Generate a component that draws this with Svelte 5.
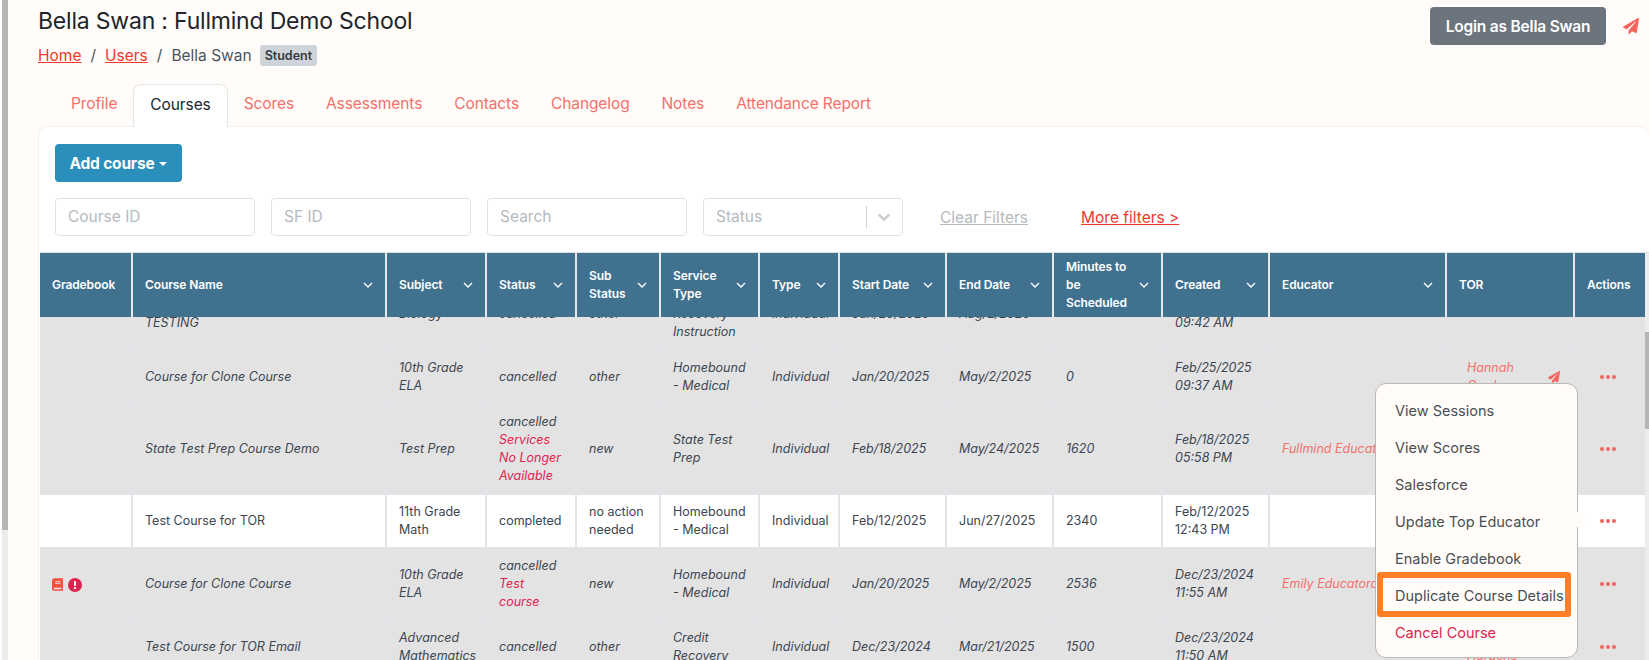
<script>
  import { onMount } from 'svelte';

  const tabs = ['Profile', 'Courses', 'Scores', 'Assessments', 'Contacts', 'Changelog', 'Notes', 'Attendance Report'];

  const columns = [
    { label: 'Gradebook', sort: false, width: 93 },
    { label: 'Course Name', sort: true, width: 254 },
    { label: 'Subject', sort: true, width: 100 },
    { label: 'Status', sort: true, width: 90 },
    { label: 'Sub\nStatus', sort: true, width: 84 },
    { label: 'Service\nType', sort: true, width: 99 },
    { label: 'Type', sort: true, width: 80 },
    { label: 'Start Date', sort: true, width: 107 },
    { label: 'End Date', sort: true, width: 107 },
    { label: 'Minutes to\nbe\nScheduled', sort: true, width: 109 },
    { label: 'Created', sort: true, width: 107 },
    { label: 'Educator', sort: true, width: 177 },
    { label: 'TOR', sort: false, width: 128 },
    { label: 'Actions', sort: false, width: 70 }
  ];

  const rows = [
    { name: 'Test Course for Clone\nTESTING', subject: 'Biology', status: 'cancelled', sub: 'other', service: 'Credit\nRecovery\nInstruction', start: 'Jan/20/2025', end: 'Aug/2/2025', minutes: '', created: 'Feb/25/2025\n09:42 AM', educator: '', tor: '' },
    { name: 'Course for Clone Course', subject: '10th Grade\nELA', status: 'cancelled', sub: 'other', service: 'Homebound\n- Medical', start: 'Jan/20/2025', end: 'May/2/2025', minutes: '0', created: 'Feb/25/2025\n09:37 AM', educator: '', tor: 'Hannah\nGardenas', plane: true },
    { name: 'State Test Prep Course Demo', subject: 'Test Prep', status: 'cancelled', reason: 'Services\nNo Longer\nAvailable', sub: 'new', service: 'State Test\nPrep', start: 'Feb/18/2025', end: 'May/24/2025', minutes: '1620', created: 'Feb/18/2025\n05:58 PM', educator: 'Fullmind Educator', tor: '' },
    { name: 'Test Course for TOR', subject: '11th Grade\nMath', status: 'completed', sub: 'no action\nneeded', service: 'Homebound\n- Medical', start: 'Feb/12/2025', end: 'Jun/27/2025', minutes: '2340', created: 'Feb/12/2025\n12:43 PM', educator: '', tor: '', active: true },
    { name: 'Course for Clone Course', subject: '10th Grade\nELA', status: 'cancelled', reason: 'Test\ncourse', sub: 'new', service: 'Homebound\n- Medical', start: 'Jan/20/2025', end: 'May/2/2025', minutes: '2536', created: 'Dec/23/2024\n11:55 AM', educator: 'Emily Educatorand', tor: '', flagged: true },
    { name: 'Test Course for TOR Email', subject: 'Advanced\nMathematics', status: 'cancelled', sub: 'other', service: 'Credit\nRecovery', start: 'Dec/23/2024', end: 'Mar/21/2025', minutes: '1500', created: 'Dec/23/2024\n11:50 AM', educator: '', tor: 'Hannah\nHardens' }
  ];

  const menu = ['View Sessions', 'View Scores', 'Salesforce', 'Update Top Educator', 'Enable Gradebook', 'Duplicate Course Details'];

  const plane = 'M476 3.2L12.5 270.6c-18.1 10.4-15.8 35.6 2.2 43.2L121 358.4l287.3-253.2c5.5-4.9 13.3 2.6 8.6 8.3L176 407v80.5c0 23.6 28.5 32.9 42.5 15.8L282 426l124.6 52.2c14.2 6 30.4-2.9 33-18.2l72-432C515 7.8 493.3-6.8 476 3.2z';

  let scroller;

  onMount(() => {
    scroller.scrollTop = 38;
  });
</script>

<div class="page">
  <div class="page-bar"><div class="page-thumb"></div></div>

  <main class="main">
    <header class="head">
      <div>
        <h1>Bella Swan : Fullmind Demo School</h1>
        <nav class="crumbs">
          <a href="#home">Home</a>
          <span class="slash">/</span>
          <a href="#users">Users</a>
          <span class="slash">/</span>
          <span>Bella Swan</span>
          <span class="badge">Student</span>
        </nav>
      </div>
      <div class="head-right">
        <button class="login">Login as Bella Swan</button>
        <svg class="plane-top" viewBox="0 0 512 512"><path d={plane} /></svg>
      </div>
    </header>

    <ul class="tabs">
      {#each tabs as tab}
        <li class:active={tab === 'Courses'}>{tab}</li>
      {/each}
    </ul>

    <section class="card">
      <div class="tools">
        <button class="add">Add course<span class="caret"></span></button>
        <div class="filters">
          <div class="field">Course ID</div>
          <div class="field">SF ID</div>
          <div class="field">Search</div>
          <div class="field select">
            <span>Status</span>
            <span class="sep"></span>
            <svg viewBox="0 0 20 20" width="18" height="18"><path d="M4 7l6 6 6-6" fill="none" stroke="#c9ccd0" stroke-width="2.6" /></svg>
          </div>
          <a class="clear" href="#clear">Clear Filters</a>
          <a class="more" href="#more">More filters &gt;</a>
        </div>
      </div>

      <div class="table-area">
        <div class="scroller" bind:this={scroller}>
          <table>
            <colgroup>
              {#each columns as col}
                <col style:width="{col.width}px" />
              {/each}
            </colgroup>
            <thead>
              <tr>
                {#each columns as col}
                  <th>
                    <div class="th-in">
                      <span>{col.label}</span>
                      {#if col.sort}
                        <svg viewBox="0 0 10 6" width="10" height="6"><path d="M1 1l4 4 4-4" fill="none" stroke="#fff" stroke-width="1.3" /></svg>
                      {/if}
                    </div>
                  </th>
                {/each}
              </tr>
            </thead>
            <tbody>
              {#each rows as row}
                <tr class:active={row.active}>
                  <td class="icons">
                    {#if row.flagged}
                      <svg class="book" viewBox="0 0 448 512"><path d="M448 360V24c0-13.3-10.7-24-24-24H96C43 0 0 43 0 96v320c0 53 43 96 96 96h328c13.3 0 24-10.7 24-24v-16c0-7.5-3.5-14.3-8.9-18.7-4.2-15.4-4.2-59.3 0-74.7 5.4-4.3 8.9-11.1 8.9-18.6zM128 134c0-3.3 2.7-6 6-6h212c3.3 0 6 2.7 6 6v20c0 3.3-2.7 6-6 6H134c-3.3 0-6-2.7-6-6v-20zm0 64c0-3.3 2.7-6 6-6h212c3.3 0 6 2.7 6 6v20c0 3.3-2.7 6-6 6H134c-3.3 0-6-2.7-6-6v-20zm253.4 250H96c-17.7 0-32-14.3-32-32 0-17.6 14.4-32 32-32h285.4c-1.9 17.1-1.9 46.9 0 64z" /></svg>
                      <svg class="alert" viewBox="0 0 14 14"><circle cx="7" cy="7" r="7" fill="#e0234e" /><rect x="6" y="3" width="2" height="5" rx="0.8" fill="#fff" /><circle cx="7" cy="10.2" r="1.1" fill="#fff" /></svg>
                    {/if}
                  </td>
                  <td>{row.name}</td>
                  <td>{row.subject}</td>
                  <td>
                    {row.status}
                    {#if row.reason}<div class="reason">{row.reason}</div>{/if}
                  </td>
                  <td>{row.sub}</td>
                  <td>{row.service}</td>
                  <td>Individual</td>
                  <td>{row.start}</td>
                  <td>{row.end}</td>
                  <td>{row.minutes}</td>
                  <td>{row.created}</td>
                  <td class="educator">{row.educator}</td>
                  <td class="tor">
                    {row.tor}
                    {#if row.plane}
                      <svg class="plane" viewBox="0 0 512 512"><path d={plane} /></svg>
                    {/if}
                  </td>
                  <td class="dots">
                    <svg viewBox="0 0 16 4" width="16" height="4"><circle cx="2" cy="2" r="2" /><circle cx="8" cy="2" r="2" /><circle cx="14" cy="2" r="2" /></svg>
                  </td>
                </tr>
              {/each}
            </tbody>
          </table>
        </div>
        <div class="table-bar"><div class="table-thumb"></div></div>
      </div>
    </section>
  </main>

  <div class="popup">
    <span class="arrow"></span>
    {#each menu as item}
      <div class="item">{item}</div>
    {/each}
    <div class="item danger">Cancel Course</div>
    <div class="highlight"></div>
  </div>
</div>

<style>
  :global(body) {
    margin: 0;
    overflow: hidden;
    background: #fffcf9;
  }

  .page {
    position: relative;
    display: flex;
    height: 660px;
    font-family: Inter, "Liberation Sans", sans-serif;
    color: #3c4650;
    overflow: hidden;
  }

  .page-bar {
    width: 6px;
    margin-left: 2px;
    background: #ececec;
    flex: none;
  }

  .page-thumb {
    height: 530px;
    background: #b5b5b5;
  }

  .main {
    flex: 1;
    min-width: 0;
    padding-left: 30px;
    display: flex;
    flex-direction: column;
  }

  .head {
    display: flex;
    justify-content: space-between;
    align-items: flex-start;
    padding-top: 7px;
    padding-right: 10px;
  }

  h1 {
    margin: 0;
    font-size: 23px;
    line-height: 28px;
    font-weight: 400;
    color: #212529;
    letter-spacing: -0.2px;
  }

  .crumbs {
    display: flex;
    align-items: center;
    margin-top: 8px;
    height: 24px;
    font-size: 15.5px;
    color: #4a5560;
  }

  .crumbs a {
    color: #f0392b;
  }

  .slash {
    margin: 0 9px;
  }

  .badge {
    margin-left: 8px;
    padding: 0 5px;
    height: 21px;
    line-height: 21px;
    font-size: 12.5px;
    font-weight: 600;
    border-radius: 3px;
    background: #ced4da;
    color: #343a40;
  }

  .head-right {
    display: flex;
    align-items: center;
    gap: 17px;
  }

  .login {
    width: 176px;
    height: 38px;
    border: 0;
    border-radius: 4px;
    background: #6c757d;
    color: #fff;
    font: 600 15.5px Inter, sans-serif;
    letter-spacing: -0.2px;
    padding: 0;
  }

  .plane-top {
    width: 16px;
    height: 16px;
    fill: #f4645c;
  }

  .tabs {
    list-style: none;
    display: flex;
    margin: 18px 0 0;
    padding: 0 0 0 18px;
    height: 60px;
  }

  .tabs {
    height: 42px;
    margin-top: 17px;
    padding-left: 17px;
    box-sizing: border-box;
  }

  .tabs li {
    padding: 0 16px;
    line-height: 40px;
    font-size: 15.5px;
    color: #f4706a;
    letter-spacing: -0.1px;
  }

  .tabs li.active {
    background: #fff;
    color: #212529;
    border: 1px solid #e7e7e7;
    border-bottom: 0;
    border-radius: 8px 8px 0 0;
    margin-bottom: -1px;
    position: relative;
    z-index: 1;
  }

  .card {
    flex: 1;
    min-height: 0;
    background: #fff;
    border: 1px solid #f1f1f1;
    border-bottom: 0;
    border-right: 0;
    border-radius: 10px 10px 0 0;
    display: flex;
    flex-direction: column;
  }

  .tools {
    padding: 17px 0 0 16px;
  }

  .add {
    width: 127px;
    height: 38px;
    border: 0;
    border-radius: 4px;
    background: #2a8fba;
    color: #fff;
    font: 700 15.5px Inter, sans-serif;
    letter-spacing: -0.2px;
    padding: 0;
  }

  .caret {
    display: inline-block;
    margin-left: 5px;
    vertical-align: 3px;
    border-top: 4px solid #fff;
    border-left: 4px solid transparent;
    border-right: 4px solid transparent;
  }

  .filters {
    display: flex;
    align-items: center;
    margin-top: 16px;
    height: 38px;
  }

  .field {
    box-sizing: border-box;
    width: 200px;
    height: 38px;
    margin-right: 16px;
    padding: 0 12px;
    border: 1px solid #dfe2e6;
    border-radius: 4px;
    line-height: 36px;
    font-size: 15.5px;
    color: #b4bac0;
  }

  .select {
    display: flex;
    align-items: center;
    padding-right: 9px;
  }

  .select span:first-child {
    flex: 1;
  }

  .sep {
    width: 1px;
    height: 22px;
    background: #cfd2d6;
    margin-right: 8px;
  }

  .clear {
    margin-left: 21px;
    font-size: 15.5px;
    color: #b4bac0;
  }

  .more {
    margin-left: 53px;
    font-size: 15.5px;
    color: #f0392b;
  }

  .table-area {
    flex: 1;
    min-height: 0;
    display: flex;
    margin: 16px 0 0 1px;
    border-top: 1px solid #e0e0e0;
  }

  .scroller {
    width: 1605px;
    overflow: hidden;
  }

  table {
    table-layout: fixed;
    width: 1605px;
    border-collapse: separate;
    border-spacing: 0;
    font-size: 12.5px;
    line-height: 18px;
  }

  th {
    position: sticky;
    top: 0;
    z-index: 1;
    height: 64px;
    box-sizing: border-box;
    padding: 0 12px;
    background: #407290;
    border-right: 2px solid #e4e7ec;
    color: #fff;
    text-align: left;
    font-size: 12px;
    font-weight: 600;
    letter-spacing: -0.1px;
  }

  .th-in {
    display: flex;
    align-items: center;
    justify-content: space-between;
    gap: 4px;
  }

  .th-in span {
    white-space: pre-line;
  }

  td {
    padding: 8px 12px;
    background: #e3e3e4;
    border-right: 2px solid #e1e5ea;
    border-bottom: 2px solid #e1e5ea;
    font-style: italic;
    white-space: pre-line;
    vertical-align: middle;
    color: #3c4650;
    overflow: hidden;
  }

  tr.active td {
    background: #fff;
    font-style: normal;
    border-bottom-color: #e3e3e4;
  }

  th:last-child,
  td:last-child {
    border-right: 0;
  }

  .reason {
    color: #e0234e;
  }

  .educator,
  .tor {
    color: #f4706a;
    white-space: pre;
  }

  .tor {
    position: relative;
    padding-left: 20px;
  }

  .plane {
    position: absolute;
    top: 20px;
    right: 13px;
    width: 12px;
    height: 12px;
    fill: #f4645c;
  }

  .icons svg {
    vertical-align: middle;
  }

  .book {
    width: 11px;
    height: 13px;
    fill: #f4523f;
    margin-right: 5px;
  }

  .alert {
    width: 14px;
    height: 14px;
  }

  .dots {
    padding-left: 25px;
    line-height: 0;
  }

  .dots svg {
    fill: #f0645c;
  }

  .table-bar {
    flex: none;
    width: 4px;
    background: #ececec;
    padding-top: 79px;
  }

  .table-thumb {
    height: 97px;
    background: #b5b5b5;
  }

  .popup {
    position: absolute;
    left: 1375px;
    top: 383px;
    width: 203px;
    height: 275px;
    box-sizing: border-box;
    padding: 8px 0;
    background: #fffcf9;
    border: 1px solid #b9b9b9;
    border-radius: 11px;
    z-index: 3;
  }

  .arrow {
    position: absolute;
    right: -6px;
    top: 130px;
    width: 11px;
    height: 11px;
    background: #fffcf9;
    transform: rotate(45deg);
  }

  .item {
    height: 37px;
    line-height: 37px;
    padding-left: 19px;
    font-size: 14.5px;
    color: #4a4f55;
    white-space: nowrap;
  }

  .danger {
    color: #e0234e;
  }

  .highlight {
    position: absolute;
    left: 1px;
    top: 188px;
    width: 194px;
    height: 45px;
    box-sizing: border-box;
    border: 6px solid #ff7f27;
    border-radius: 3px;
  }
</style>
